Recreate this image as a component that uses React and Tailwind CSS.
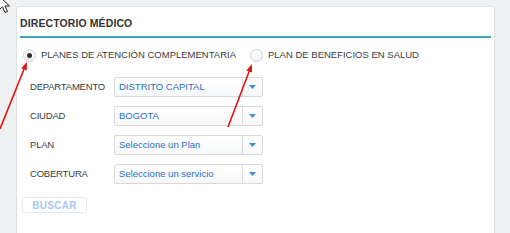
import { useState } from 'react';

const FIELDS = [
    { label: 'DEPARTAMENTO', value: 'DISTRITO CAPITAL' },
    { label: 'CIUDAD', value: 'BOGOTA' },
    { label: 'PLAN', value: 'Seleccione un Plan' },
    { label: 'COBERTURA', value: 'Seleccione un servicio' },
];

function Radio({ checked }) {
    return (
        <span className="w-[13px] h-[13px] rounded-full border border-[#cfd2d4] bg-gradient-to-b from-white to-[#eef0f1] flex items-center justify-center shrink-0">
            {checked && <span className="w-[5px] h-[5px] rounded-full bg-[#2b2b2b]"></span>}
        </span>
    );
}

function Select({ value }) {
    return (
        <div className="w-[149px] h-[20px] border border-[#d6d8da] rounded-[2px] bg-gradient-to-b from-white to-[#f6f7f8] flex">
            <div className="flex-1 pl-[4px] flex items-center text-[#1f6fc6] whitespace-nowrap overflow-hidden">{value}</div>
            <div className="w-[20px] border-l border-[#d6d8da] flex items-center justify-center">
                <svg width="7" height="4" viewBox="0 0 7 4">
                    <path d="M0 0 L7 0 L3.5 4 Z" fill="#3b8fd4" />
                </svg>
            </div>
        </div>
    );
}

export default function App() {
    const [plan, setPlan] = useState('pac');

    return (
        <div className="relative w-[510px] h-[233px] overflow-hidden bg-[#eef0f2] pt-[6px] pl-[16px] pr-[15px] font-['Liberation_Sans',Arial,sans-serif] text-[9.5px] text-[#3a3a3a]">
            {/* panel */}
            <div className="h-[260px] bg-white border border-[#dde1e4] rounded-t-[3px] px-[3px]">
                <div className="h-[31px] pt-[4px] flex items-center border-b-2 border-[#3aa3c0]">
                    <h2 className="text-[10.5px] font-bold text-[#333] tracking-[0.1px]">DIRECTORIO MÉDICO</h2>
                </div>

                <div className="mt-[7px] h-[20px] flex items-center">
                    <label className="w-[227px] ml-[3px] flex items-center gap-[5px] cursor-pointer" onClick={() => setPlan('pac')}>
                        <Radio checked={plan === 'pac'} />
                        <span className="whitespace-nowrap">PLANES DE ATENCIÓN COMPLEMENTARIA</span>
                    </label>
                    <label className="flex items-center gap-[5px] cursor-pointer" onClick={() => setPlan('pbs')}>
                        <Radio checked={plan === 'pbs'} />
                        <span className="whitespace-nowrap">PLAN DE BENEFICIOS EN SALUD</span>
                    </label>
                </div>

                <div className="mt-[12px] pl-[10px] flex flex-col gap-[9px]">
                    {FIELDS.map(f => (
                        <div key={f.label} className="flex items-center">
                            <span className="w-[84px] tracking-[-0.2px]">{f.label}</span>
                            <Select value={f.value} />
                        </div>
                    ))}
                </div>

                <button disabled className="mt-[13px] ml-[2px] w-[65px] h-[16px] border border-[#e6eaee] rounded-[2px] text-[10px] font-bold text-[#a9c7e8] tracking-[0.3px]">
                    BUSCAR
                </button>
            </div>

            {/* annotation arrows */}
            <svg className="absolute inset-0 pointer-events-none" width="510" height="233">
                <line x1="0" y1="129" x2="24.5" y2="68" stroke="#e31212" strokeWidth="1.6" />
                <polygon points="27,62 26.8,70.5 21.2,68.3" fill="#e31212" />
                <line x1="228" y1="127" x2="249.5" y2="70.5" stroke="#e31212" strokeWidth="1.6" />
                <polygon points="252,64 251.95,72.55 246.35,70.41" fill="#e31212" />
            </svg>

            {/* mouse cursor */}
            <svg className="absolute left-[-2px] top-[-5px] pointer-events-none" width="14" height="21" viewBox="0 0 14 21">
                <path d="M1 1 L1 15 L4.5 11.8 L7 17.5 L9.5 16.5 L7 11 L11.5 11 Z" fill="white" stroke="#222" strokeWidth="1" strokeLinejoin="round" />
            </svg>
        </div>
    );
}
